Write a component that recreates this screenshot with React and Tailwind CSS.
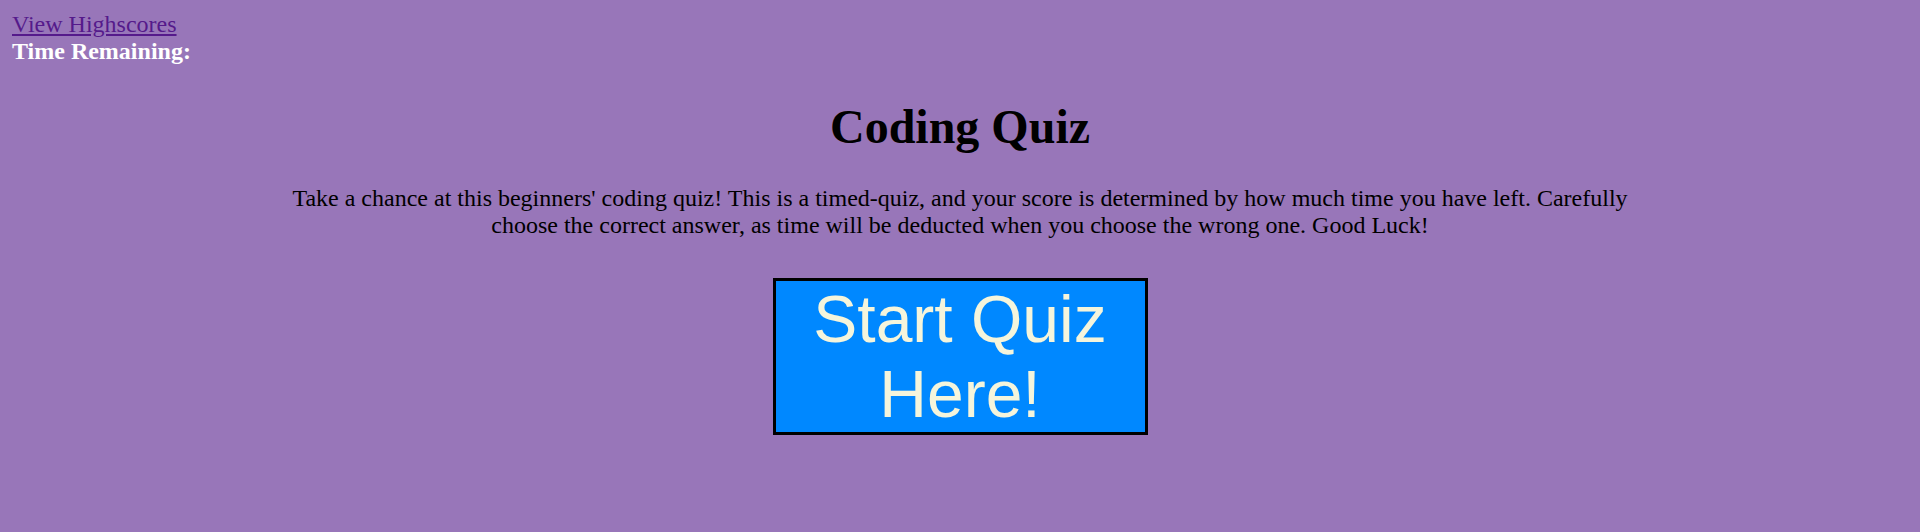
export default function App() {
  return (
    <div className="min-h-[532px] bg-[#9876b9] font-['Liberation_Serif','Times_New_Roman',serif] text-[24px] leading-[26.7px] text-black">
      <div className="pl-[12px] pt-[11px]">
        <a href="#" className="text-[#551a8b] underline">
          View Highscores
        </a>
        <div className="font-bold text-white">Time Remaining:</div>
      </div>
      <h1 className="mt-[36px] text-center text-[48px] font-bold leading-[53px]">Coding Quiz</h1>
      <p className="mx-auto mt-[32px] w-[70%] text-center">
        Take a chance at this beginners' coding quiz! This is a timed-quiz, and your score is determined by how much time you have left. Carefully choose the correct answer, as time will be deducted when you choose the wrong one. Good Luck!
      </p>
      <div className="mt-[39px] flex justify-center">
        <button className="box-border h-[157px] w-[375px] border-[3px] border-black bg-[#0088ff] pt-[1px] text-center font-['Liberation_Sans',Arial,sans-serif] text-[66px] leading-[75px] text-[#f5f5dc]">
          Start Quiz Here!
        </button>
      </div>
    </div>
  );
}
